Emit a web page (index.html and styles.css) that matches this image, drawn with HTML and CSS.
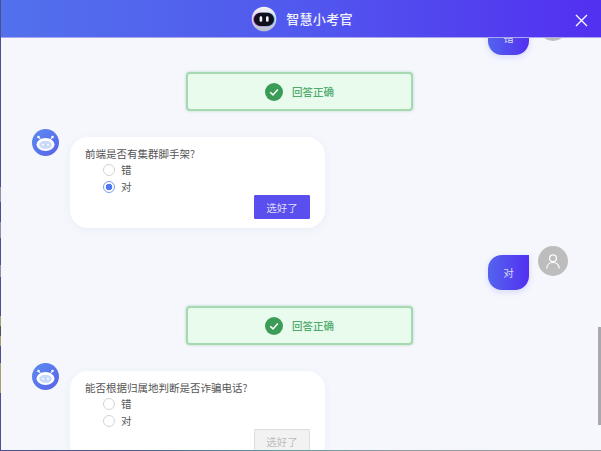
FILE: index.html
```html
<!DOCTYPE html>
<html lang="zh-CN">
<head>
<meta charset="utf-8">
<title>智慧小考官</title>
<link rel="stylesheet" href="styles.css">
</head>
<body>
<div class="window">
  <header class="header">
    <div class="brand">
      <svg class="logo" width="26" height="26" viewBox="0 0 26 26">
        <defs>
          <linearGradient id="rim" x1="0" y1="0" x2="1" y2="0">
            <stop offset="0" stop-color="#d63fd0"/><stop offset="1" stop-color="#3fc0f0"/>
          </linearGradient>
          <linearGradient id="ball" x1="0" y1="0" x2="0" y2="1">
            <stop offset="0" stop-color="#f4f4f8"/><stop offset="1" stop-color="#b9bccb"/>
          </linearGradient>
        </defs>
        <circle cx="13" cy="13" r="12.3" fill="url(#ball)"/>
        <rect x="2.2" y="6.4" width="21.6" height="14" rx="7" fill="url(#rim)"/>
        <rect x="3" y="6.8" width="20" height="13.2" rx="6.6" fill="#10101c"/>
        <rect x="8.6" y="10.2" width="2.6" height="5.6" rx="1.3" fill="#f2f2f6"/>
        <rect x="15" y="10.2" width="2.6" height="5.6" rx="1.3" fill="#f2f2f6"/>
      </svg>
      <span class="title">智慧小考官</span>
    </div>
    <svg class="close" width="13" height="13" viewBox="0 0 13 13">
      <path d="M1 1 12 12M12 1 1 12" stroke="#fff" stroke-width="1.3" fill="none"/>
    </svg>
  </header>
  <main class="chat">
    <div class="user-row first">
      <div class="bubble">错</div>
      <div class="user-avatar"></div>
    </div>
    <div class="result">
      <svg class="check" width="18" height="18" viewBox="0 0 18 18">
        <circle cx="9" cy="9" r="9" fill="#3a9c57"/>
        <path d="M5.2 9.2 8 11.9 12.8 6.4" stroke="#fff" stroke-width="1.5" fill="none"/>
      </svg>
      <span>回答正确</span>
    </div>
    <div class="bot-row">
      <svg class="bot-avatar" width="27" height="27" viewBox="0 0 27 27">
        <defs>
          <linearGradient id="botbg" x1="0" y1="0" x2="1" y2="1">
            <stop offset="0" stop-color="#5b8cf0"/><stop offset="1" stop-color="#5a62e8"/>
          </linearGradient>
        </defs>
        <circle cx="13.5" cy="13.5" r="13.5" fill="url(#botbg)"/>
        <circle cx="6.500" cy="8" r="1.3" fill="#fff"/>
        <circle cx="20.500" cy="8" r="1.3" fill="#fff"/>
        <path d="M7 9 9.600 11M20 9 17.400 11" stroke="#fff" stroke-width="1"/>
        <ellipse cx="13.5" cy="15.500" rx="9" ry="6.500" fill="#fff"/>
        <ellipse cx="13.5" cy="15.800" rx="6.300" ry="4" fill="#c9d9fb"/>
        <circle cx="11" cy="15.800" r="1" fill="#fff"/>
        <circle cx="16" cy="15.800" r="1" fill="#fff"/>
      </svg>
      <div class="card">
        <p class="question">前端是否有集群脚手架?</p>
        <label class="option"><span class="radio"></span>错</label>
        <label class="option"><span class="radio on"></span>对</label>
        <div class="actions"><button class="submit">选好了</button></div>
      </div>
    </div>
    <div class="user-row">
      <div class="bubble">对</div>
      <div class="user-avatar">
        <svg width="14" height="15" viewBox="0 0 14 15">
          <circle cx="7" cy="4.200" r="3.400" fill="none" stroke="#fff" stroke-width="1.200"/>
          <path d="M.8 14.500c0-3.600 2.700-6 6.200-6s6.200 2.400 6.200 6" fill="none" stroke="#fff" stroke-width="1.200"/>
        </svg>
      </div>
    </div>
    <div class="result">
      <svg class="check" width="18" height="18" viewBox="0 0 18 18">
        <circle cx="9" cy="9" r="9" fill="#3a9c57"/>
        <path d="M5.2 9.2 8 11.9 12.8 6.4" stroke="#fff" stroke-width="1.5" fill="none"/>
      </svg>
      <span>回答正确</span>
    </div>
    <div class="bot-row">
      <svg class="bot-avatar" width="27" height="27" viewBox="0 0 27 27">
        <circle cx="13.5" cy="13.5" r="13.5" fill="url(#botbg)"/>
        <circle cx="6.500" cy="8" r="1.3" fill="#fff"/>
        <circle cx="20.500" cy="8" r="1.3" fill="#fff"/>
        <path d="M7 9 9.600 11M20 9 17.400 11" stroke="#fff" stroke-width="1"/>
        <ellipse cx="13.5" cy="15.500" rx="9" ry="6.500" fill="#fff"/>
        <ellipse cx="13.5" cy="15.800" rx="6.300" ry="4" fill="#c9d9fb"/>
        <circle cx="11" cy="15.800" r="1" fill="#fff"/>
        <circle cx="16" cy="15.800" r="1" fill="#fff"/>
      </svg>
      <div class="card">
        <p class="question">能否根据归属地判断是否诈骗电话?</p>
        <label class="option"><span class="radio"></span>错</label>
        <label class="option"><span class="radio"></span>对</label>
        <div class="actions"><button class="submit off">选好了</button></div>
      </div>
    </div>
    <div class="scrollbar"></div>
  </main>
</div>
</body>
</html>
```

FILE: styles.css
```css
* { box-sizing: border-box; }
html, body { margin: 0; padding: 0; height: 100%; overflow: hidden; }
body {
  font-family: "Noto Sans CJK SC", "Liberation Sans", sans-serif;
  background-color: #4a4f8f;
  background-image:
    linear-gradient(90deg, #4a4f8f 0, #4a5a8f 130px, #5f9aa0 270px, #8f9ba0 400px, #9a9a9a 100%),
    linear-gradient(180deg,
      #4a4f8f 0 187px, #8f90a8 187px 202px, #4a4f8f 202px 222px, #8f90a8 222px 238px,
      #4a4f8f 238px 265px, #8f90a8 265px 277px, #4a4f8f 277px 316px, #a8a070 316px 326px,
      #55554f 326px 336px, #a8a070 336px 346px, #4a4f8f 346px 363px, #a8a070 363px 393px,
      #4a4f8f 393px);
  background-size: 100% 1px, 1px 100%;
  background-position: left bottom, left top;
  background-repeat: no-repeat;
}
.window {
  width: 600px;
  height: 450px;
  margin-left: 1px;
  display: flex;
  flex-direction: column;
  background: #f5f7fd;
  overflow: hidden;
  position: relative;
}
.header {
  flex: none;
  height: 38px;
  position: relative;
  z-index: 2;
  display: flex;
  align-items: center;
  justify-content: center;
  background: linear-gradient(90deg, #5271ec 0%, #5158ee 50%, #5230f0 100%);
  border-bottom: 1px solid #a9a6ee;
  padding-left: 2px;
}
.brand { display: flex; align-items: center; gap: 9px; }
.logo { display: block; }
.title { color: #f2f2fe; font-size: 13px; font-weight: 500; letter-spacing: 0.3px; line-height: 20px; }
.close { position: absolute; right: 13px; top: 14px; }
.chat { flex: 1; position: relative; overflow: hidden; }
.user-row {
  display: flex;
  justify-content: flex-end;
  gap: 9px;
  padding-right: 33px;
  margin-top: 18px;
}
.user-row.first { margin-top: -27px; margin-bottom: 17px; }
.bubble {
  width: 41px;
  height: 35px;
  margin-top: 9px;
  border-radius: 14px 0 14px 14px;
  background: linear-gradient(90deg, #5364ee, #5230f0);
  color: #dcdcfa;
  font-size: 10.5px;
  line-height: 35px;
  text-align: center;
  box-shadow: 0 2px 6px rgba(82, 70, 238, 0.18);
}
.user-avatar {
  width: 30px;
  height: 30px;
  border-radius: 50%;
  background: #bdbdbd;
  display: flex;
  align-items: center;
  justify-content: center;
}
.result {
  width: 227px;
  height: 39px;
  margin: 16px 0 0 185px;
  display: flex;
  align-items: center;
  justify-content: center;
  gap: 9px;
  background: #e8fbec;
  border: 2px solid #a6d9b2;
  border-radius: 4px;
  box-shadow: 0 0 3px rgba(58, 156, 87, 0.35);
  color: #4faa6c;
  font-size: 10.5px;
  font-weight: 500;
}
.check { display: block; }
.bot-row { display: flex; align-items: flex-start; gap: 11px; padding-left: 31px; margin-top: 18px; }
.bot-avatar { display: block; flex: none; }
.card {
  width: 255px;
  height: 91px;
  margin-top: 8px;
  padding: 9px 15px 0;
  border-radius: 18px;
  background: #fff;
  box-shadow: 0 2px 8px rgba(80, 90, 160, 0.06);
  color: #555;
  font-size: 10.5px;
}
.question { margin: 0; line-height: 15px; }
.option {
  display: flex;
  align-items: center;
  gap: 6px;
  height: 17px;
  padding-left: 18px;
  line-height: 17px;
}
.radio {
  width: 12px;
  height: 12px;
  border-radius: 50%;
  border: 1px solid #d4d4d4;
  background: #fff;
}
.radio.on { border-color: #7a9af5; background: radial-gradient(circle, #4f78f2 0 3px, #fff 3.6px); }
.actions { display: flex; justify-content: flex-end; }
.submit {
  width: 56px;
  height: 24px;
  padding: 0;
  border: 1px solid #5a4eee;
  border-radius: 1px;
  background: #5a4eee;
  color: #dcdcfa;
  font-family: inherit;
  font-size: 10.5px;
}
.submit.off { background: #f2f2f2; border-color: #dcdcdc; color: #bdbdbd; }
.scrollbar { position: absolute; right: 0; top: 289px; width: 3px; height: 98px; background: #a8a8ae; }
```
